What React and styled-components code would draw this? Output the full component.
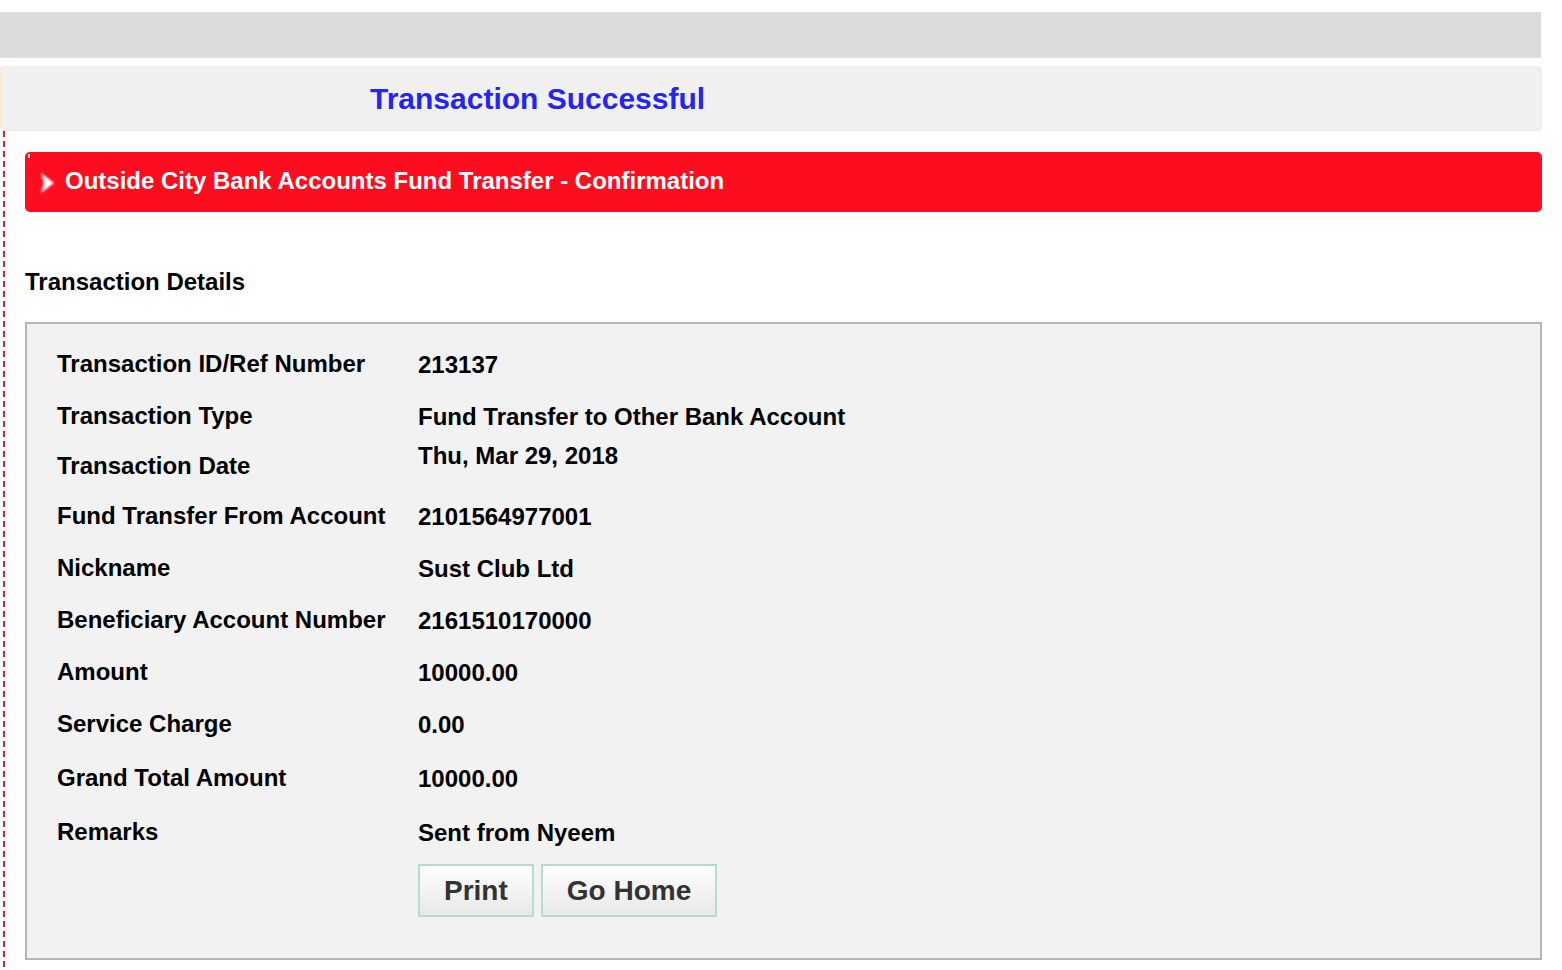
import styled, { createGlobalStyle } from "styled-components";

const GlobalStyle = createGlobalStyle`
  html, body {
    margin: 0;
    padding: 0;
    background: #ffffff;
  }
  body {
    font-family: "Liberation Sans", Arial, Helvetica, sans-serif;
    color: #000;
  }
`;

const Page = styled.div`
  width: 1542px;
  padding-top: 12px;
`;

const TopBar = styled.div`
  width: 1541px;
  height: 46px;
  background: #dcdcdc;
`;

const SuccessBox = styled.div`
  margin-top: 8px;
  height: 63px;
  background: #f0f0f0;
  border: 1px solid #fbeacd;
  border-radius: 4px;
  display: flex;
  align-items: center;
  padding-left: 369px;
`;

const SuccessText = styled.h1`
  margin: 0;
  font-size: 30px;
  font-weight: bold;
  color: #2424f4;
`;

// red dashed rule down the left edge
const Content = styled.div`
  margin-left: 3px;
  padding: 21px 0 10px 22px;
  background: repeating-linear-gradient(
      to bottom,
      #e01e2c 0,
      #e01e2c 6px,
      transparent 6px,
      transparent 10px
    )
    left top / 2px 100% no-repeat;
`;

const SectionBar = styled.div`
  position: relative;
  height: 60px;
  background: #fc0d1f;
  border-radius: 5px;
  display: flex;
  align-items: center;
  gap: 9px;
  padding-left: 14px;

  &::before {
    content: "";
    position: absolute;
    left: 3px;
    top: 2px;
    width: 2px;
    height: 4px;
    background: #ffd6d8;
  }
`;

const BarTitle = styled.h2`
  margin: 0;
  font-size: 24px;
  font-weight: bold;
  color: #ffffff;
  padding-bottom: 2px;
`;

const DetailsHeading = styled.h3`
  margin: 0;
  padding-top: 56px;
  height: 54px;
  font-size: 24px;
  font-weight: bold;
  line-height: 28px;
  box-sizing: content-box;
`;

const DetailsBox = styled.div`
  border: 2px solid #b5b5b5;
  background: #f2f2f2;
  padding: 14px 30px 41px 30px;
`;

const Row = styled.div`
  display: grid;
  grid-template-columns: 361px 1fr;
  height: ${(p) => p.h || 52}px;
  align-items: center;
`;

const Label = styled.div`
  font-size: 24px;
  font-weight: bold;
  line-height: 28px;
`;

const Value = styled.div`
  font-size: 24px;
  font-weight: bold;
  line-height: 28px;
  align-self: ${(p) => (p.top ? "start" : "center")};
  padding-top: ${(p) => (p.top ? 0 : 2)}px;
`;

const Actions = styled.div`
  margin-top: 6px;
  margin-left: 361px;
  display: flex;
  gap: 7px;
`;

const Button = styled.button`
  height: 53px;
  padding: 0 24px;
  border: 2px solid #b3ddd0;
  background: linear-gradient(#ffffff, #e8e8e8);
  font-family: "Liberation Sans", Arial, Helvetica, sans-serif;
  font-size: 28px;
  font-weight: bold;
  color: #333333;
  cursor: pointer;
`;

const Arrow = () => (
  <svg width="17" height="26" viewBox="0 0 17 26">
    <defs>
      <filter id="soft" x="-30%" y="-30%" width="160%" height="160%">
        <feGaussianBlur stdDeviation="0.8" />
      </filter>
    </defs>
    <polygon points="2,4 15,14 2,24 5,14" fill="#ffffff" filter="url(#soft)" />
  </svg>
);

const rows = [
  { label: "Transaction ID/Ref Number", value: "213137", h: 52 },
  { label: "Transaction Type", value: "Fund Transfer to Other Bank Account", h: 52 },
  { label: "Transaction Date", value: "Thu, Mar 29, 2018", h: 48, top: true },
  { label: "Fund Transfer From Account", value: "2101564977001", h: 52 },
  { label: "Nickname", value: "Sust Club Ltd", h: 52 },
  { label: "Beneficiary Account Number", value: "2161510170000", h: 52 },
  { label: "Amount", value: "10000.00", h: 52 },
  { label: "Service Charge", value: "0.00", h: 52 },
  { label: "Grand Total Amount", value: "10000.00", h: 56 },
  { label: "Remarks", value: "Sent from Nyeem", h: 52 },
];

const App = () => {
  return (
    <Page>
      <GlobalStyle />
      <TopBar />
      <SuccessBox>
        <SuccessText>Transaction Successful</SuccessText>
      </SuccessBox>
      <Content>
        <SectionBar>
          <Arrow />
          <BarTitle>Outside City Bank Accounts Fund Transfer - Confirmation</BarTitle>
        </SectionBar>
        <DetailsHeading>Transaction Details</DetailsHeading>
        <DetailsBox>
          {rows.map((r) => (
            <Row key={r.label} h={r.h}>
              <Label>{r.label}</Label>
              <Value top={r.top}>{r.value}</Value>
            </Row>
          ))}
          <Actions>
            <Button>Print</Button>
            <Button>Go Home</Button>
          </Actions>
        </DetailsBox>
      </Content>
    </Page>
  );
};

export default App;
